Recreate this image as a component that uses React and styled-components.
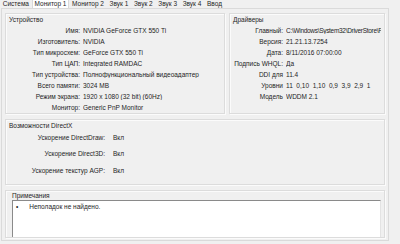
import React from 'react'
import styled, { createGlobalStyle } from 'styled-components'

const Global = createGlobalStyle`
  html, body {
    margin: 0;
    padding: 0;
    background: #f0f0f0;
  }
  body {
    font-family: 'Liberation Sans', Arial, sans-serif;
    font-size: 6.5px;
    color: #1e1e1e;
  }
`

const Window = styled.div`
  width: 400px;
  height: 244px;
  overflow: hidden;
  background: #f0f0f0;
  display: flex;
  flex-direction: column;
`

const TabBar = styled.div`
  display: flex;
  height: 9px;
  align-items: stretch;
`

const Tab = styled.div`
  padding: 0 2.8px;
  line-height: 8px;
  background: ${p => (p.$active ? '#ffffff' : 'transparent')};
  box-shadow: ${p => (p.$active ? 'inset 1px 0 0 #d9d9d9, inset -1px 0 0 #d9d9d9' : 'none')};
`

const Page = styled.div`
  margin: 0 11px 7px 1px;
  flex: 1;
  border: 1px solid #dadada;
  padding: 4px 3px 2px 3px;
  display: flex;
  flex-direction: column;
  gap: 5px;
`

const TopRow = styled.div`
  display: grid;
  grid-template-columns: 220px 1fr;
  gap: 4px;
  height: 101px;
`

const Group = styled.div`
  border: 1px solid #dcdcdc;
  box-shadow: inset 1px 1px 0 #fbfbfb, 1px 1px 0 #fbfbfb;
  padding: ${p => p.$pad || '2px 3px'};
  height: ${p => p.$h || 'auto'};
  box-sizing: border-box;
  overflow: hidden;
`

const Title = styled.div`
  line-height: 7px;
  margin-bottom: ${p => p.$mb || '3px'};
`

const Rows = styled.div`
  display: grid;
  grid-template-columns: ${p => p.$label}px auto;
  column-gap: ${p => p.$gap || 3}px;
  grid-auto-rows: ${p => p.$row}px;
  align-items: center;
  white-space: nowrap;
`

const Label = styled.span`
  text-align: right;
`

const Value = styled.span`
  overflow: hidden;
  letter-spacing: ${p => (p.$tight ? '-0.3px' : 'normal')};
`

const Notes = styled.div`
  margin-top: 1px;
  height: 32px;
  background: #ffffff;
  border-top: 1px solid #8a8a8a;
  border-left: 1px solid #8a8a8a;
  border-right: 1px solid #e3e3e3;
  border-bottom: 1px solid #e3e3e3;
  padding: 2px 3px;
  display: flex;
  gap: 11px;
  line-height: 7px;
`

const device = [
  ['Имя:', 'NVIDIA GeForce GTX 550 Ti'],
  ['Изготовитель:', 'NVIDIA'],
  ['Тип микросхем:', 'GeForce GTX 550 Ti'],
  ['Тип ЦАП:', 'Integrated RAMDAC'],
  ['Тип устройства:', 'Полнофункциональный видеоадаптер'],
  ['Всего памяти:', '3024 MB'],
  ['Режим экрана:', '1920 x 1080 (32 bit) (60Hz)'],
  ['Монитор:', 'Generic PnP Monitor'],
]

const drivers = [
  ['Главный:', 'C:\\Windows\\System32\\DriverStore\\F', true],
  ['Версия:', '21.21.13.7254'],
  ['Дата:', '8/11/2016 07:00:00'],
  ['Подпись WHQL:', 'Да'],
  ['DDI для', '11.4'],
  ['Уровни', '11_0,10_1,10_0,9_3,9_2,9_1'],
  ['Модель', 'WDDM 2.1'],
]

const directx = [
  ['Ускорение DirectDraw:', 'Вкл'],
  ['Ускорение Direct3D:', 'Вкл'],
  ['Ускорение текстур AGP:', 'Вкл'],
]

const tabs = ['Система', 'Монитор 1', 'Монитор 2', 'Звук 1', 'Звук 2', 'Звук 3', 'Звук 4', 'Ввод']

const InfoRows = ({ items, label, row, gap }) => (
  <Rows $label={label} $row={row} $gap={gap}>
    {items.map(([k, v, tight]) => (
      <React.Fragment key={k}>
        <Label>{k}</Label>
        <Value $tight={tight}>{v}</Value>
      </React.Fragment>
    ))}
  </Rows>
)

export default function App() {
  return (
    <Window>
      <Global />
      <TabBar>
        {tabs.map(t => (
          <Tab key={t} $active={t === 'Монитор 1'}>{t}</Tab>
        ))}
      </TabBar>
      <Page>
        <TopRow>
          <Group>
            <Title $mb="2px">Устройство</Title>
            <InfoRows items={device} label={71} row={11} />
          </Group>
          <Group>
            <Title $mb="2px">Драйверы</Title>
            <InfoRows items={drivers} label={50} row={11} />
          </Group>
        </TopRow>
        <Group $h="66px">
          <Title $mb="0">Возможности DirectX</Title>
          <InfoRows items={directx} label={96} row={16.5} gap={8} />
        </Group>
        <Group $h="48px" $pad="1px 3px 2px 6px">
          <Title $mb="1px">Примечания</Title>
          <Notes>
            <span>•</span>
            <span>Неполадок не найдено.</span>
          </Notes>
        </Group>
      </Page>
    </Window>
  )
}
